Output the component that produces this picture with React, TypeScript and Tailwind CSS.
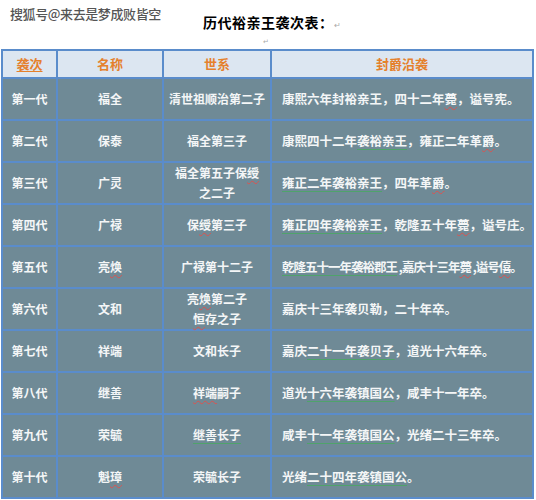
import React from "react";

const font = '"Noto Sans CJK SC", "Noto Sans", sans-serif';

type Row = { a: string; b: React.ReactNode; c: React.ReactNode; d: React.ReactNode; tight?: boolean };

const R = ({ children }: { children: React.ReactNode }) => (
  <span className="underline decoration-wavy decoration-[#d9534f] decoration-1 underline-offset-2">{children}</span>
);
const G = ({ children }: { children: React.ReactNode }) => (
  <span className="underline decoration-[#4fa36b] decoration-1 underline-offset-[3px]">{children}</span>
);

const rows: Row[] = [
  { a: "第一代", b: "福全", c: "清世祖顺治第二子", d: <>康熙六年封裕亲王，四十二年<R>薨</R>，谥号宪。</> },
  { a: "第二代", b: "保泰", c: "福全第三子", d: <>康熙四十二年<G>袭裕亲王</G>，雍正二年革<R>爵</R>。</> },
  { a: "第三代", b: "广灵", c: <>福全第五子保<R>绶</R><br />之二子</>, d: <><G>雍正二年袭裕亲王</G>，四年革<R>爵</R>。</> },
  { a: "第四代", b: "广禄", c: <>保<R>绶</R>第三子</>, d: <><G>雍正四年袭裕亲王</G>，乾隆五十年<R>薨</R>，谥号庄。</> },
  { a: "第五代", b: <>亮<R>焕</R></>, c: "广禄第十二子", d: <><G>乾隆五十一年袭裕郡王</G> ,嘉庆十三年<R>薨</R> ,谥号<R>僖</R>。</>, tight: true },
  { a: "第六代", b: "文和", c: <>亮<R>焕</R>第二子<br /><R>恒</R>存之子</>, d: <>嘉庆十三年袭贝勒，二十年卒。</> },
  { a: "第七代", b: "祥端", c: "文和长子", d: <>嘉庆<G>二十一年袭贝子</G>，道光十六年卒。</> },
  { a: "第八代", b: "继善", c: <><R>祥端</R>嗣子</>, d: <>道光<G>十六年袭镇国公</G>，咸丰十一年卒。</> },
  { a: "第九代", b: "荣毓", c: <G>继善长子</G>, d: <>咸丰<G>十一年袭镇国公</G>，光绪二十三年卒。</> },
  { a: "第十代", b: <>魁<R>璋</R></>, c: "荣毓长子", d: <>光绪<G>二十四年袭镇国公</G>。</> },
];

export default function App() {
  return (
    <div className="relative w-[536px] h-[500px] bg-white overflow-hidden" style={{ fontFamily: font }}>
      <div className="absolute left-[10px] top-[4px] text-[13px] leading-[20px] text-[#555] font-medium tracking-[-0.4px]">
        搜狐号@来去是梦成败皆空
      </div>
      <div className="h-[49px] flex flex-col items-center">
        <div className="mt-[12px] text-[14px] leading-[20px] font-bold text-black tracking-[0.5px] ml-[8px]">
          历代裕亲王袭次表：<span className="text-[8px] font-normal text-[#aaa]">↵</span>
        </div>
        <div className="text-[7px] leading-[8px] text-[#aaa] ml-[-4px] mt-[2px]">↵</div>
      </div>
      <div className="ml-[1px] w-[533px] p-[2px] bg-[#5a8ccb] grid grid-cols-[53px_104px_106px_260px] gap-[2px] font-bold">
        {["袭次", "名称", "世系", "封爵沿袭"].map((h, i) => (
          <div key={h} className="h-[26px] bg-[#dce6f1] flex items-center justify-center text-[13px] text-[#e5802c]">
            {i === 0 ? <span className="underline decoration-[#e5802c] decoration-1 underline-offset-2">{h}</span> : h}
          </div>
        ))}
        {rows.map((r) => (
          <React.Fragment key={r.a}>
            <div className="h-[40px] bg-[#6f8a96] flex items-center justify-center text-[12px] text-[#f4f6f7]">{r.a}</div>
            <div className="h-[40px] bg-[#6f8a96] flex items-center justify-center text-[12px] text-[#f4f6f7]"><div>{r.b}</div></div>
            <div className="h-[40px] bg-[#6f8a96] flex items-center justify-center text-[12px] leading-[20px] text-[#f4f6f7]"><div className="text-center">{r.c}</div></div>
            <div className={`h-[40px] bg-[#6f8a96] flex items-center pl-[10px] text-[12.5px] text-[#f4f6f7] whitespace-nowrap overflow-hidden ${r.tight ? "tracking-[-1px]" : "tracking-normal"}`}><div>{r.d}</div></div>
          </React.Fragment>
        ))}
      </div>
    </div>
  );
}
